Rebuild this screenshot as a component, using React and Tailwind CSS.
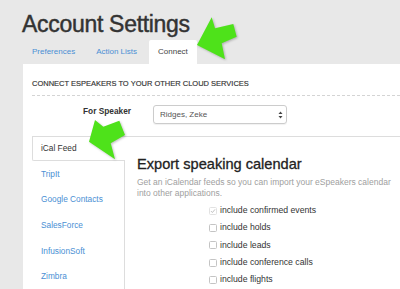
export default function App() {
  const tabs = [
    { label: "Preferences", active: false },
    { label: "Action Lists", active: false },
    { label: "Connect", active: true },
  ];
  const services = ["TripIt", "Google Contacts", "SalesForce", "InfusionSoft", "Zimbra"];
  const options = [
    { label: "include confirmed events", checked: true },
    { label: "include holds", checked: false },
    { label: "include leads", checked: false },
    { label: "include conference calls", checked: false },
    { label: "include flights", checked: false },
  ];

  return (
    <div className="relative w-[400px] h-[289px] overflow-hidden bg-[#e8e8e8] font-['Liberation_Sans',Arial,sans-serif] text-[#333]">
      <h1 className="pl-[22px] pt-[10px] h-[40px] text-[23px] leading-[28px] tracking-[-0.3px] text-[#333] [-webkit-text-stroke:0.45px_#333]">
        Account Settings
      </h1>

      <div className="flex gap-[3px] pl-[23px] h-[24px] text-[8px]">
        {tabs.map((t) => (
          <div
            key={t.label}
            className={
              t.active
                ? "px-[9px] flex items-center bg-white rounded-t-[2px] text-[#444]"
                : "px-[9px] flex items-center text-[#4a8fd4]"
            }
          >
            {t.label}
          </div>
        ))}
      </div>

      <div className="ml-[23px] bg-white h-[225px] pl-[9px]">
        <div className="pt-[15px] pb-[6px] border-b border-dashed border-[#d4d4d4] text-[7.5px] leading-[10px] text-[#333] whitespace-nowrap [-webkit-text-stroke:0.15px_#333]">
          CONNECT ESPEAKERS TO YOUR OTHER CLOUD SERVICES
        </div>

        <div className="flex items-start mt-[9px]">
          <div className="w-[99px] pt-[1px] text-right text-[8.3px] leading-[10px] font-bold text-[#333]">
            For Speaker
          </div>
          <div className="ml-[22px] w-[134px] h-[19px] border border-[#ccc] rounded-[3px] shadow-[0_1px_1px_rgba(0,0,0,0.06)] flex items-center justify-between pl-[6px] pr-[3px] text-[8px] text-[#555]">
            <span>Ridges, Zeke</span>
            <svg width="5" height="8" viewBox="0 0 5 8">
              <path d="M2.5 0.5 L4.5 3 L0.5 3 Z" fill="#444" />
              <path d="M2.5 7.5 L4.5 5 L0.5 5 Z" fill="#444" />
            </svg>
          </div>
        </div>

        <div className="mt-[12px] border-t border-[#ddd] flex h-[200px]">
          <div className="w-[93px] flex flex-col">
            <div className="h-[24px] border-l border-b border-[#ddd] rounded-bl-[2px] pl-[8px] flex items-center text-[8.3px] text-[#333]">
              iCal Feed
            </div>
            <div className="flex-1 border-r border-[#ddd] pl-[9px]">
              {services.map((s) => (
                <div key={s} className="h-[25.7px] flex items-center text-[8.3px] text-[#4a8fd4]">
                  {s}
                </div>
              ))}
            </div>
          </div>

          <div className="pl-[12px] w-[270px]">
            <h2 className="pt-[17.5px] text-[14.6px] leading-[18px] text-[#222] whitespace-nowrap [-webkit-text-stroke:0.3px_#222]">
              Export speaking calendar
            </h2>
            <p className="mt-[4.5px] w-[258px] text-[8.5px] leading-[10.5px] text-[#a0a0a0]">
              Get an iCalendar feeds so you can import your eSpeakers calendar into other applications.
            </p>
            <div className="mt-[4px] pl-[72px]">
              {options.map((o) => (
                <label key={o.label} className="h-[17.3px] flex items-center gap-[3px] text-[8.7px] text-[#333]">
                  <span
                    className={
                      o.checked
                        ? "w-[8px] h-[8px] border border-[#e2e2e2] rounded-[1.5px] bg-white flex items-center justify-center"
                        : "w-[8px] h-[8px] border border-[#c4c4c4] rounded-[1.5px] bg-white flex items-center justify-center"
                    }
                  >
                    {o.checked && (
                      <svg width="6" height="6" viewBox="0 0 6 6">
                        <path d="M1 3.1 L2.4 4.5 L5 1.4" stroke="#b0b0b0" strokeWidth="0.8" fill="none" />
                      </svg>
                    )}
                  </span>
                  <span>{o.label}</span>
                </label>
              ))}
            </div>
          </div>
        </div>
      </div>

      <svg
        className="absolute inset-0 pointer-events-none drop-shadow-[1px_1px_1px_rgba(0,0,0,0.25)]"
        width="400"
        height="289"
        viewBox="0 0 400 289"
      >
        <polygon
          points="197,45 211.7,17.3 215,28.3 233.3,24 236.7,36.7 221.7,43.3 225,59.3"
          fill="#4ee21a"
        />
        <polygon
          points="89,141.7 95,120 103.3,126.7 119.3,120.7 125,135 110.7,143.3 115,159.3"
          fill="#4ee21a"
        />
      </svg>
    </div>
  );
}
